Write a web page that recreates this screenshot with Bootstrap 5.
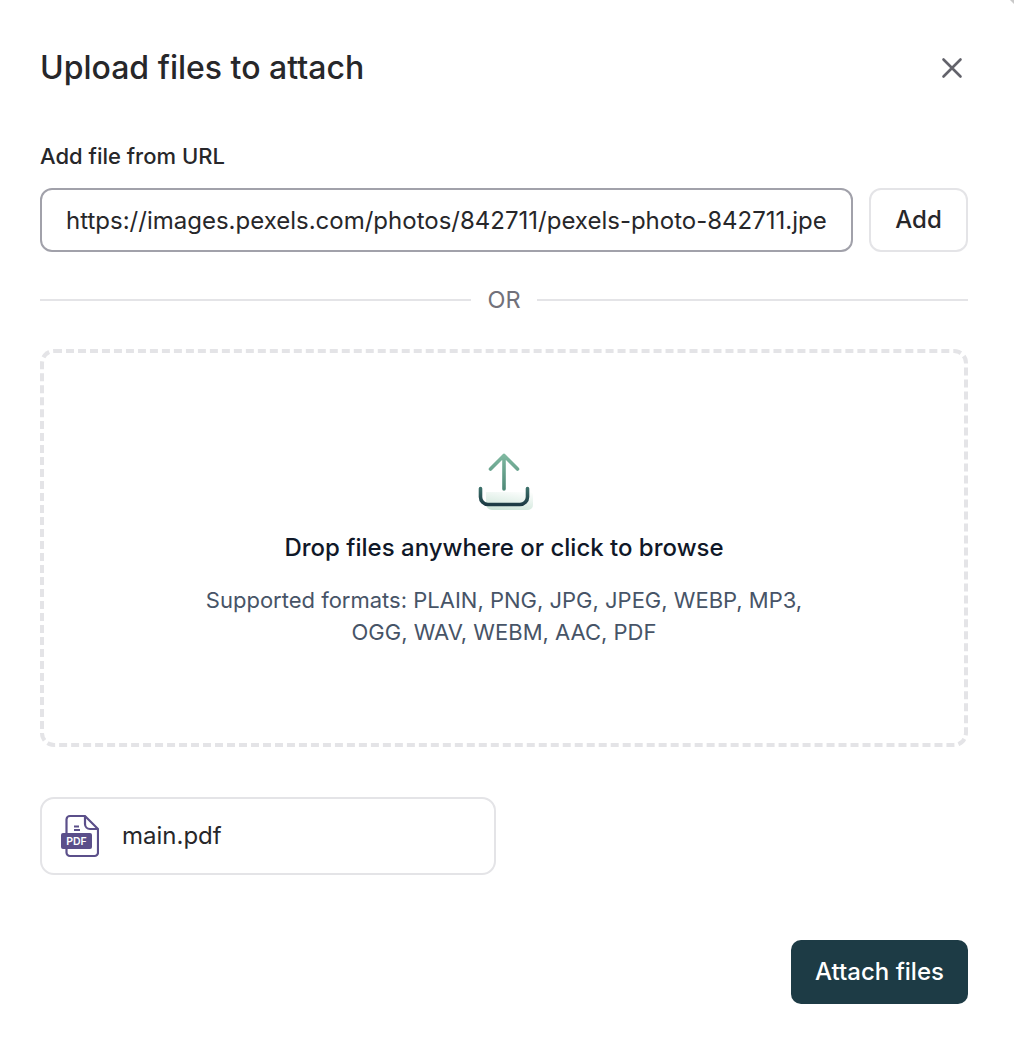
<!DOCTYPE html>
<html lang="en">
<head>
    <meta charset="UTF-8">
    <meta name="viewport" content="width=device-width, initial-scale=1.0">
    <title>Upload files to attach</title>
    <link href="https://cdn.jsdelivr.net/npm/bootstrap@5.3.3/dist/css/bootstrap.min.css" rel="stylesheet">
    <style>
        body {
            font-family: Inter, "Liberation Sans", sans-serif;
            color: #27272a;
            background: #fff;
        }
        .upload-dialog {
            width: 1014px;
            height: 1044px;
            padding: 0 46px 0 40px;
            overflow: hidden;
        }
        .dialog-head {
            height: 144px;
            padding-top: 47px;
            align-items: flex-start;
        }
        .dialog-title {
            font-size: 32px;
            line-height: 42px;
            font-weight: 500;
            margin: 0;
        }
        .close-btn {
            width: 24px;
            height: 24px;
            margin: 9px 4px 0 0;
            border: 0;
            background: none;
            padding: 0;
        }
        .url-label {
            display: block;
            height: 24px;
            font-size: 22px;
            line-height: 24px;
            font-weight: 500;
            margin-bottom: 20px;
        }
        .url-input {
            height: 64px;
            flex: 1;
            border: 2px solid #a1a1aa;
            border-radius: 12px;
            padding: 0 24px;
            font-size: 24px;
            color: #27272a;
            min-width: 0;
        }
        .url-input:focus {
            border-color: #a1a1aa;
            box-shadow: none;
        }
        .add-btn {
            width: 99px;
            height: 64px;
            border: 2px solid #e4e4e7;
            border-radius: 12px;
            font-size: 24px;
            font-weight: 500;
            color: #27272a;
            padding: 0;
        }
        .or-row {
            height: 32px;
            margin: 32px 0 33px;
            color: #71717a;
            font-size: 23.5px;
        }
        .or-line {
            flex: 1;
            height: 2px;
            background: #e4e4e7;
        }
        .drop-zone {
            height: 398px;
            border: 4px dashed #e4e4e7;
            border-radius: 14px;
            padding-top: 97px;
        }
        .drop-title {
            font-size: 24px;
            line-height: 32px;
            font-weight: 500;
            color: #101828;
            margin: 20px 0 20px;
        }
        .drop-note {
            font-size: 22px;
            line-height: 32px;
            color: #475467;
            margin: 0;
            width: 620px;
        }
        .file-chip {
            width: 456px;
            height: 78px;
            margin-top: 50px;
            border: 2px solid #e4e4e7;
            border-radius: 14px;
            padding-left: 19px;
            font-size: 24px;
        }
        .chip-name {
            margin-left: 23px;
        }
        .attach-row {
            margin-top: 65px;
        }
        .attach-btn {
            width: 177px;
            height: 64px;
            background: #1d3b45;
            color: #fff;
            border: 0;
            border-radius: 10px;
            font-size: 24px;
            font-weight: 500;
            padding: 0;
        }
        .attach-btn:hover {
            background: #1d3b45;
            color: #fff;
        }
        .corner-mark {
            position: absolute;
            top: 0;
            right: 0;
        }
    </style>
</head>
<body>
    <div class="upload-dialog position-relative">
        <svg class="corner-mark" width="14" height="14" viewBox="0 0 14 14" aria-hidden="true">
            <path d="M10 0 L14 4 L14 0 Z" fill="#c9c9c9"/>
        </svg>

        <div class="dialog-head d-flex justify-content-between">
            <h1 class="dialog-title">Upload files to attach</h1>
            <button class="close-btn d-flex align-items-center justify-content-center" type="button" aria-label="Close">
                <svg width="24" height="24" viewBox="0 0 24 24" fill="none" stroke="#63636b" stroke-width="2.6" stroke-linecap="round">
                    <path d="M3.5 3.5 L20.5 20.5 M20.5 3.5 L3.5 20.5"/>
                </svg>
            </button>
        </div>

        <label class="url-label" for="fileUrl">Add file from URL</label>
        <div class="d-flex gap-3">
            <input id="fileUrl" class="form-control url-input" type="text" value="https://images.pexels.com/photos/842711/pexels-photo-842711.jpeg">
            <button class="btn add-btn bg-white" type="button">Add</button>
        </div>

        <div class="or-row d-flex align-items-center gap-3">
            <div class="or-line"></div>
            <span>OR</span>
            <div class="or-line"></div>
        </div>

        <div class="drop-zone d-flex flex-column align-items-center text-center">
            <svg width="60" height="62" viewBox="0 0 60 62" fill="none" class="flex-shrink-0">
                <defs>
                    <linearGradient id="trayGrad" x1="0" y1="0" x2="0" y2="1">
                        <stop offset="0" stop-color="#3b6f69"/>
                        <stop offset="1" stop-color="#1d3b45"/>
                    </linearGradient>
                    <linearGradient id="arrowGrad" x1="0" y1="0" x2="0" y2="1">
                        <stop offset="0" stop-color="#7fb8a0"/>
                        <stop offset="1" stop-color="#4f8a78"/>
                    </linearGradient>
                    <linearGradient id="fillGrad" x1="0.35" y1="1" x2="0.7" y2="0">
                        <stop offset="0" stop-color="#cfe6da"/>
                        <stop offset="1" stop-color="#ffffff"/>
                    </linearGradient>
                </defs>
                <path d="M12 42 H52 L54 40 A5 5 0 0 1 59 45 V55 A5 5 0 0 1 54 60 H18 A6 6 0 0 1 12 54 Z" fill="url(#fillGrad)"/>
                <path d="M30 39 V5.5 M16.5 19 L30 5.5 L43.5 19" stroke="url(#arrowGrad)" stroke-width="3.6" stroke-linecap="round" stroke-linejoin="round"/>
                <path d="M6.5 38.5 V47 A7.5 7.5 0 0 0 14 54.5 H46 A7.5 7.5 0 0 0 53.5 47 V38.5" stroke="url(#trayGrad)" stroke-width="3.6" stroke-linecap="round"/>
            </svg>
            <div class="drop-title">Drop files anywhere or click to browse</div>
            <p class="drop-note">Supported formats: PLAIN, PNG, JPG, JPEG, WEBP, MP3, OGG, WAV, WEBM, AAC, PDF</p>
        </div>

        <div class="file-chip d-flex align-items-center bg-white">
            <svg width="38" height="44" viewBox="0 0 38 44" fill="none" class="flex-shrink-0">
                <path d="M5.5 19 V5.5 A3.5 3.5 0 0 1 9 2 H24 L37 15 V38.5 A3.5 3.5 0 0 1 33.5 42 H9 A3.5 3.5 0 0 1 5.5 38.5 V35" stroke="#5b4f8a" stroke-width="2.2"/>
                <path d="M24 2 V10 A5 5 0 0 0 29 15 H37" stroke="#5b4f8a" stroke-width="2.2"/>
                <path d="M13 12.5 H18 M13 16 H19" stroke="#5b4f8a" stroke-width="1.8"/>
                <rect x="0" y="19" width="31" height="16" rx="2" fill="#5b4f8a"/>
                <text x="15.5" y="31" text-anchor="middle" font-family="Inter, 'Liberation Sans', sans-serif" font-size="10.5" font-weight="600" fill="#fff">PDF</text>
            </svg>
            <span class="chip-name">main.pdf</span>
        </div>

        <div class="attach-row d-flex justify-content-end">
            <button class="btn attach-btn" type="button">Attach files</button>
        </div>
    </div>

    <script src="https://cdn.jsdelivr.net/npm/bootstrap@5.3.3/dist/js/bootstrap.bundle.min.js"></script>
</body>
</html>
